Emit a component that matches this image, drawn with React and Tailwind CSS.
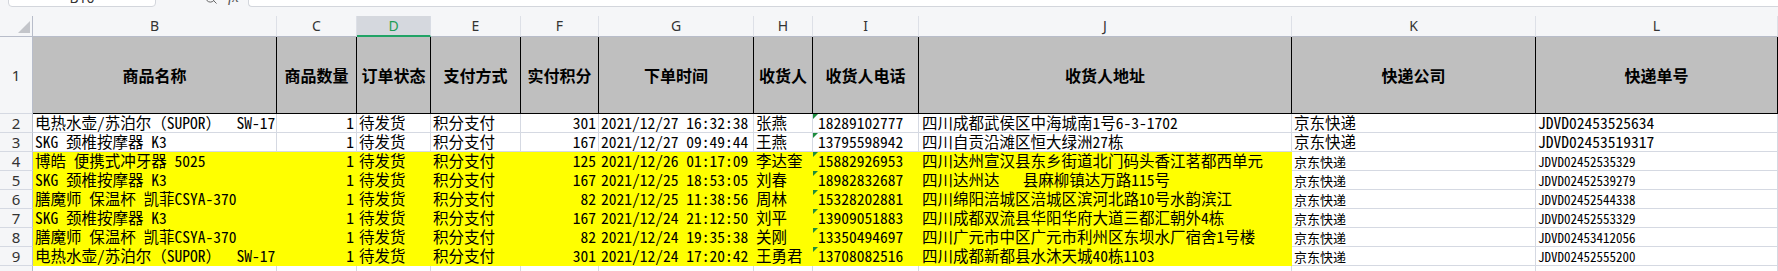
import { Search } from "lucide-react";

const GRID =
  "grid grid-cols-[33px_244px_80px_74px_90px_78px_155px_59px_106px_373px_244px_1fr]";

const LETTERS = ["B", "C", "D", "E", "F", "G", "H", "I", "J", "K", "L"];
const HEADERS = [
  "商品名称",
  "商品数量",
  "订单状态",
  "支付方式",
  "实付积分",
  "下单时间",
  "收货人",
  "收货人电话",
  "收货人地址",
  "快递公司",
  "快递单号",
];

const ROWS = [
  { n: 2, name: "电热水壶/苏泊尔（SUPOR）  SW-17", pts: 301, time: "2021/12/27 16:32:38", who: "张燕", tel: "18289102777", addr: "四川成都武侯区中海城南1号6-3-1702", no: "JDVD02453525634", hl: false },
  { n: 3, name: "SKG 颈椎按摩器 K3", pts: 167, time: "2021/12/27 09:49:44", who: "王燕", tel: "13795598942", addr: "四川自贡沿滩区恒大绿洲27栋", no: "JDVD02453519317", hl: false },
  { n: 4, name: "博皓 便携式冲牙器 5025", pts: 125, time: "2021/12/26 01:17:09", who: "李达奎", tel: "15882926953", addr: "四川达州宣汉县东乡街道北门码头香江茗都西单元", no: "JDVD02452535329", hl: true },
  { n: 5, name: "SKG 颈椎按摩器 K3", pts: 167, time: "2021/12/25 18:53:05", who: "刘春", tel: "18982832687", addr: "四川达州达   县麻柳镇达万路115号", no: "JDVD02452539279", hl: true },
  { n: 6, name: "膳魔师 保温杯 凯菲CSYA-370", pts: 82, time: "2021/12/25 11:38:56", who: "周林", tel: "15328202881", addr: "四川绵阳涪城区涪城区滨河北路10号水韵滨江", no: "JDVD02452544338", hl: true },
  { n: 7, name: "SKG 颈椎按摩器 K3", pts: 167, time: "2021/12/24 21:12:50", who: "刘平", tel: "13909051883", addr: "四川成都双流县华阳华府大道三都汇朝外4栋", no: "JDVD02452553329", hl: true },
  { n: 8, name: "膳魔师 保温杯 凯菲CSYA-370", pts: 82, time: "2021/12/24 19:35:38", who: "关刚", tel: "13350494697", addr: "四川广元市中区广元市利州区东坝水厂宿舍1号楼", no: "JDVD02453412056", hl: true },
  { n: 9, name: "电热水壶/苏泊尔（SUPOR）  SW-17", pts: 301, time: "2021/12/24 17:20:42", who: "王勇君", tel: "13708082516", addr: "四川成都新都县水沐天城40栋1103", no: "JDVD02452555200", hl: true },
];

const DATA_FONT = "font-['Noto_Sans_Mono_CJK_SC','Noto_Sans_CJK_SC',sans-serif]";

function RowNum({ children, tall }) {
  return (
    <div
      className={`flex items-center justify-center border-r border-b border-r-[#b8bdca] border-b-[#d5d9e2] bg-[#f5f6f8] font-['Noto_Sans',sans-serif] text-[15px] leading-none text-[#333] ${
        tall ? "h-[77px]" : "h-[19px]"
      }`}
    >
      {children}
    </div>
  );
}

function Cell({ hl, right, small, pl = "pl-[2px]", children }) {
  return (
    <div
      className={`relative flex h-[19px] items-center whitespace-pre border-r border-b leading-none text-black ${DATA_FONT} ${pl} ${
        right ? "justify-end pr-[2px]" : ""
      } ${small ? "text-[13px]" : "text-[15.5px]"} ${
        hl ? "border-[#ffff00] bg-[#ffff00]" : "border-[#d5d9e2] bg-white"
      }`}
    >
      {children}
    </div>
  );
}

function DataRow({ row }) {
  const hl = row.hl;
  return (
    <>
      <RowNum>{row.n}</RowNum>
      <Cell hl={hl}>{row.name}</Cell>
      <Cell hl={hl} right>1</Cell>
      <Cell hl={hl}>待发货</Cell>
      <Cell hl={hl}>积分支付</Cell>
      <Cell hl={hl} right>{row.pts}</Cell>
      <Cell hl={hl}>{row.time}</Cell>
      <Cell hl={hl}>{row.who}</Cell>
      <Cell hl={hl} pl="pl-[5px]">
        <span className="absolute left-0 top-0 h-0 w-0 border-t-[5px] border-r-[5px] border-t-[#1e8c3e] border-r-transparent" />
        {row.tel}
      </Cell>
      <Cell hl={hl} pl="pl-[3px]">{row.addr}</Cell>
      <Cell small={hl}>京东快递</Cell>
      <Cell small={hl}>{row.no}</Cell>
    </>
  );
}

export default function App() {
  return (
    <div className="h-[271px] w-[1778px] overflow-hidden bg-white">
      <div className="h-[16px] bg-[#f5f6f8]">
        <div className="flex h-[7px] items-end overflow-hidden">
          <div className="ml-[8px] flex h-[26px] w-[148px] shrink-0 items-end justify-center rounded-b-[4px] border border-[#d3d6dc] bg-white pb-[1px] font-['Noto_Sans',sans-serif] text-[14px] leading-none text-[#333]">
            B10
          </div>
          <div className="ml-[48px] flex h-[20px] items-end gap-[10px] pb-[2px] text-[#555]">
            <Search size={14} strokeWidth={1.5} />
            <span className="font-['Liberation_Serif',serif] text-[15px] italic leading-none">fx</span>
          </div>
          <div className="ml-[9px] h-[26px] flex-1 rounded-bl-[4px] border border-r-0 border-[#d3d6dc] bg-white" />
        </div>
      </div>

      <div className={GRID}>
        <div className="relative h-[21px] border-r border-b border-[#b8bdca] bg-[#f5f6f8]">
          <span className="absolute bottom-[3px] right-[2px] h-0 w-0 border-b-[12px] border-l-[12px] border-b-[#c3c5ca] border-l-transparent" />
        </div>
        {LETTERS.map((l) =>
          l === "D" ? (
            <div
              key={l}
              className="flex h-[21px] items-center justify-center border-r border-b-2 border-r-[#d8dce4] border-b-[#21a366] bg-[#d5d8de] font-['Noto_Sans',sans-serif] text-[14px] leading-none text-[#1f9d55]"
            >
              {l}
            </div>
          ) : (
            <div
              key={l}
              className="flex h-[21px] items-center justify-center border-r border-b border-r-[#dde0e7] border-b-[#b8bdca] bg-[#f5f6f8] font-['Noto_Sans',sans-serif] text-[14px] leading-none text-[#333]"
            >
              {l}
            </div>
          )
        )}

        <RowNum tall>1</RowNum>
        {HEADERS.map((h) => (
          <div
            key={h}
            className="flex h-[77px] items-center justify-center border-r border-b border-black bg-[#bfbfbf] font-['Noto_Sans_CJK_SC',sans-serif] text-[16px] font-bold text-black"
          >
            {h}
          </div>
        ))}

        {ROWS.map((row) => (
          <DataRow key={row.n} row={row} />
        ))}

        <RowNum>10</RowNum>
        {LETTERS.map((l) => (
          <div key={l} className="h-[19px] border-r border-b border-[#d5d9e2] bg-white" />
        ))}
      </div>
    </div>
  );
}
